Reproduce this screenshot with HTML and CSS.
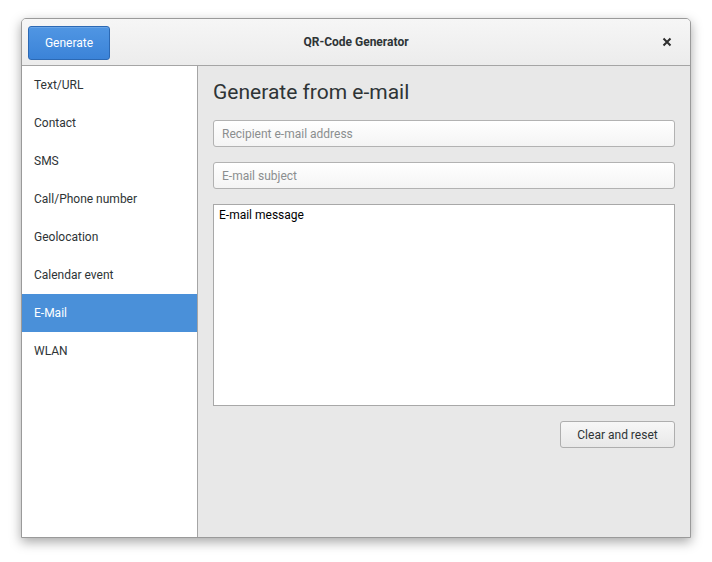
FILE: index.html
```html
<!DOCTYPE html>
<html>
<head>
<meta charset="utf-8">
<link rel="stylesheet" href="styles.css">
</head>
<body>
<div class="window">
  <header class="titlebar">
    <div class="left"><button class="btn-generate">Generate</button></div>
    <div class="title">QR-Code Generator</div>
    <div class="right">
      <button class="btn-close" aria-label="Close">
        <svg width="10" height="10" viewBox="0 0 10 10"><path d="M1.5 1.5 L8.5 8.5 M8.5 1.5 L1.5 8.5" stroke="#2e2e2e" stroke-width="2"/></svg>
      </button>
    </div>
  </header>
  <div class="main">
    <nav class="sidebar">
      <div class="item">Text/URL</div>
      <div class="item">Contact</div>
      <div class="item">SMS</div>
      <div class="item">Call/Phone number</div>
      <div class="item">Geolocation</div>
      <div class="item">Calendar event</div>
      <div class="item active">E-Mail</div>
      <div class="item">WLAN</div>
    </nav>
    <section class="content">
      <h1 class="heading">Generate from e-mail</h1>
      <input class="field" type="text" placeholder="Recipient e-mail address">
      <input class="field" type="text" placeholder="E-mail subject">
      <div class="message">E-mail message</div>
      <div class="actions">
        <button class="btn-reset">Clear and reset</button>
      </div>
    </section>
  </div>
</div>
</body>
</html>
```
FILE: styles.css
```css
html, body {
  margin: 0;
  padding: 0;
  background: #ffffff;
}
body {
  font-family: Roboto, "Liberation Sans", sans-serif;
  font-size: 12px;
  color: #2e3436;
  height: 562px;
}
.window {
  margin: 18px 0 0 21px;
  width: 668px;
  height: 518px;
  border: 1px solid #9a9a9a;
  border-radius: 5px 5px 0 0;
  box-shadow: 0 4px 12px rgba(0, 0, 0, 0.35);
  display: flex;
  flex-direction: column;
  overflow: hidden;
  background: #e8e8e8;
}
.titlebar {
  height: 46px;
  flex: none;
  border-bottom: 1px solid #a5a5a5;
  background: linear-gradient(#f6f6f6, #ececec);
  display: grid;
  grid-template-columns: 1fr auto 1fr;
  align-items: center;
  padding: 0 6px;
}
.left {
  display: flex;
}
.right {
  display: flex;
  justify-content: flex-end;
}
.btn-generate {
  width: 82px;
  height: 34px;
  border: 1px solid #2c69b4;
  border-radius: 3px;
  background: linear-gradient(#5096e3, #3b83d8);
  color: #ffffff;
  font-family: Roboto, "Liberation Sans", sans-serif;
  font-size: 12px;
  padding: 0;
  margin-top: 1px;
  box-shadow: inset 0 1px 0 rgba(255,255,255,0.15);
}
.title {
  text-align: center;
  font-weight: bold;
  font-size: 12px;
  color: #2e3436;
}
.btn-close {
  width: 26px;
  height: 26px;
  border: 0;
  background: none;
  padding: 0;
  margin-right: 4px;
  display: flex;
  align-items: center;
  justify-content: center;
}
.main {
  flex: 1;
  display: flex;
  min-height: 0;
}
.sidebar {
  width: 175px;
  flex: none;
  background: #ffffff;
  border-right: 1px solid #a5a5a5;
}
.item {
  height: 38px;
  line-height: 38px;
  padding-left: 12px;
  font-size: 12px;
  color: #2e3436;
}
.item.active {
  background: #4a90d9;
  color: #ffffff;
}
.content {
  flex: 1;
  padding: 0 15px 0 15px;
  display: flex;
  flex-direction: column;
}
.heading {
  margin: 12px 0 0 0;
  font-size: 21px;
  font-weight: normal;
  line-height: 28px;
  color: #2e3436;
  height: 42px;
}
.field {
  box-sizing: border-box;
  height: 27px;
  width: 100%;
  margin: 0 0 15px 0;
  border: 1px solid #b2b2b2;
  border-radius: 3px;
  background: linear-gradient(#ffffff, #f4f4f4);
  padding: 0 8px;
  font-family: Roboto, "Liberation Sans", sans-serif;
  font-size: 12px;
  color: #2e3436;
  outline: none;
}
.field::placeholder {
  color: #8b8e8f;
}
.message {
  box-sizing: border-box;
  height: 202px;
  border: 1px solid #a8a8a8;
  background: #ffffff;
  padding: 2px 5px;
  font-size: 12px;
  line-height: 16px;
  color: #000000;
}
.actions {
  display: flex;
  justify-content: flex-end;
  margin-top: 15px;
}
.btn-reset {
  width: 115px;
  height: 27px;
  border: 1px solid #aeaeae;
  border-radius: 3px;
  background: linear-gradient(#f7f7f7, #e8e8e8);
  font-family: Roboto, "Liberation Sans", sans-serif;
  font-size: 12px;
  color: #2e3436;
  padding: 0;
}
```
